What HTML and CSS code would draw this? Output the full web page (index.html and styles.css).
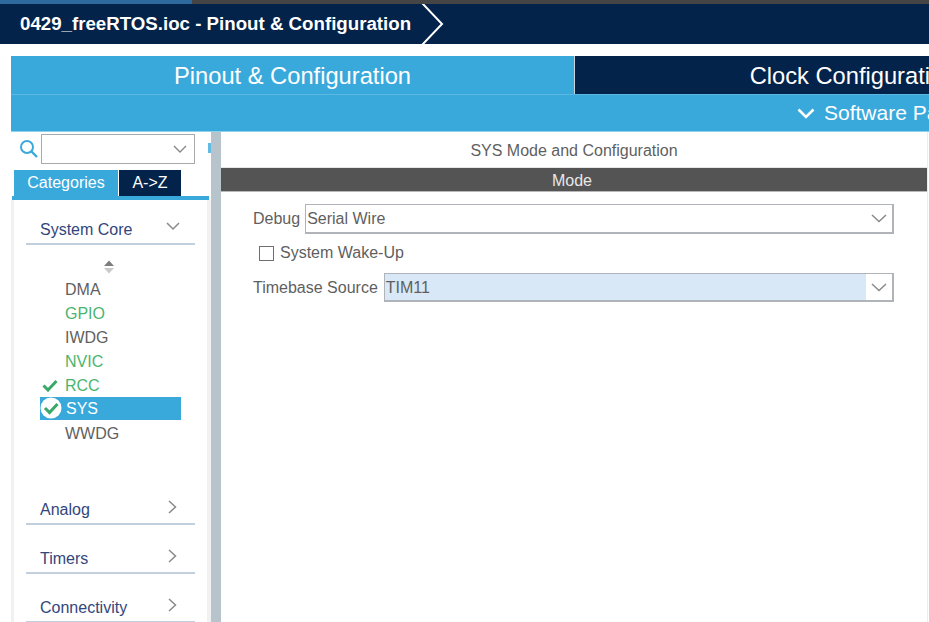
FILE: index.html
```html
<!DOCTYPE html>
<html lang="en">
<head>
<meta charset="utf-8">
<title>Pinout &amp; Configuration</title>
<link rel="stylesheet" href="styles.css">
</head>
<body>
<div class="progress"><div class="progress-fill"></div></div>
<header class="crumb">
  <span class="crumb-text">0429_freeRTOS.ioc - Pinout &amp; Configuration</span>
  <svg class="crumb-arrow" width="24" height="40" viewBox="0 0 24 40"><path d="M1 -1 L21 20 L1 41" fill="none" stroke="#fff" stroke-width="2"/></svg>
</header>
<div class="workspace">
  <nav class="tabs">
    <div class="tab tab-active">Pinout &amp; Configuration</div>
    <div class="tab tab-dark">Clock Configuration</div>
  </nav>
  <div class="subbar">
    <div class="subbar-left"></div>
    <div class="subbar-right">
      <svg class="sw-chevron" width="18" height="11" viewBox="0 0 18 11"><path d="M1.5 1.5 L9 9 L16.5 1.5" fill="none" stroke="#fff" stroke-width="2.6"/></svg>
      <span>Software Packs</span>
    </div>
  </div>
  <div class="main">
    <aside class="sidebar">
      <div class="search">
        <svg class="search-icon" width="20" height="20" viewBox="0 0 20 20"><circle cx="8" cy="8" r="6" fill="none" stroke="#39a9dc" stroke-width="2"/><path d="M12.5 12.5 L18 18" stroke="#39a9dc" stroke-width="2.4"/></svg>
        <div class="search-box">
          <svg width="14" height="8" viewBox="0 0 14 8"><path d="M1 1 L7 7 L13 1" fill="none" stroke="#888" stroke-width="1.4"/></svg>
        </div>
        <span class="gear-peek"></span>
      </div>
      <div class="cat-tabs">
        <div class="cat-tab cat-tab-on">Categories</div>
        <div class="cat-tab cat-tab-off">A-&gt;Z</div>
      </div>
      <div class="tree">
        <div class="group group-first">
          <span>System Core</span>
          <svg width="14" height="9" viewBox="0 0 14 9"><path d="M1 1 L7 7 L13 1" fill="none" stroke="#8a8a8a" stroke-width="1.5"/></svg>
        </div>
        <svg class="sort" width="12" height="14" viewBox="0 0 12 14"><path d="M6 0.500 L11 6 H1 Z" fill="#7d7d7d"/><path d="M6 13.500 L11 8 H1 Z" fill="#c9c9c9"/></svg>
        <ul class="items">
          <li class="item">DMA</li>
          <li class="item item-green">GPIO</li>
          <li class="item">IWDG</li>
          <li class="item item-green">NVIC</li>
          <li class="item item-green">
            <svg class="mark" width="16" height="13" viewBox="0 0 16 13"><path d="M1.500 6.500 L6 11 L14.500 2" fill="none" stroke="#3aa868" stroke-width="3"/></svg>
            RCC
          </li>
          <li class="item item-selected">
            <svg class="mark-round" width="22" height="22" viewBox="0 0 22 22"><circle cx="11" cy="11" r="10.500" fill="#fff"/><path d="M5 11 L9.500 15.500 L17.500 7" fill="none" stroke="#3aa868" stroke-width="3"/></svg>
            SYS
          </li>
          <li class="item">WWDG</li>
        </ul>
        <div class="group group-analog group-closed"><span>Analog</span>
          <svg width="9" height="14" viewBox="0 0 9 14"><path d="M1 1 L7.500 7 L1 13" fill="none" stroke="#8a8a8a" stroke-width="1.500"/></svg>
        </div>
        <div class="group group-closed"><span>Timers</span>
          <svg width="9" height="14" viewBox="0 0 9 14"><path d="M1 1 L7.500 7 L1 13" fill="none" stroke="#8a8a8a" stroke-width="1.500"/></svg>
        </div>
        <div class="group group-closed"><span>Connectivity</span>
          <svg width="9" height="14" viewBox="0 0 9 14"><path d="M1 1 L7.500 7 L1 13" fill="none" stroke="#8a8a8a" stroke-width="1.500"/></svg>
        </div>
      </div>
    </aside>
    <div class="splitter"></div>
    <section class="content">
      <h2 class="content-title">SYS Mode and Configuration</h2>
      <div class="mode-bar">Mode</div>
      <div class="form">
        <div class="row row-debug">
          <label class="field-label">Debug</label>
          <div class="select">
            <span class="select-value">Serial Wire</span>
            <span class="select-btn"><svg width="16" height="9" viewBox="0 0 16 9"><path d="M1 1 L8 7.500 L15 1" fill="none" stroke="#8a8a8a" stroke-width="1.500"/></svg></span>
          </div>
        </div>
        <div class="row row-check">
          <span class="check"></span>
          <span class="field-label">System Wake-Up</span>
        </div>
        <div class="row row-time">
          <label class="field-label">Timebase Source</label>
          <div class="select">
            <span class="select-value select-value-hi">TIM11</span>
            <span class="select-btn"><svg width="16" height="9" viewBox="0 0 16 9"><path d="M1 1 L8 7.500 L15 1" fill="none" stroke="#8a8a8a" stroke-width="1.500"/></svg></span>
          </div>
        </div>
      </div>
    </section>
  </div>
</div>
</body>
</html>
```

FILE: styles.css
```css
* { box-sizing: border-box; }
html, body { margin: 0; padding: 0; height: 622px; overflow: hidden; background: #fff; }
body { font-family: "Liberation Sans", Arial, sans-serif; color: #5f5f5f; width: 929px; }

.progress { height: 4px; background: #454545; }
.progress-fill { width: 192px; height: 100%; background: #2e6a9e; }

.crumb { height: 40px; background: #03234b; display: flex; align-items: center; padding-left: 20px; overflow: hidden; }
.crumb-text { color: #fff; font-size: 18.700px; font-weight: bold; white-space: nowrap; }
.crumb-arrow { margin-left: 10px; flex: none; }

.workspace { margin: 12px 0 0 11px; }

.tabs { display: flex; height: 38px; }
.tab { height: 38px; font-size: 23.700px; color: #fff; display: flex; justify-content: center; padding-top: 7px; white-space: nowrap; flex: none; width: 563px; }
.tab-active { background: #39a9dc; }
.tab-dark { background: #03234b; border-left: 1px solid #c8d3da; padding-right: 6px; }

.subbar { display: flex; height: 38px; background: #39a9dc; width: 1126px; border-top: 1px solid #5cb8e2; border-bottom: 1px solid #8fd0ec; }
.subbar-left { width: 563px; flex: none; }
.subbar-right { display: flex; align-items: center; padding-left: 223px; gap: 9px; color: #fff; font-size: 21px; white-space: nowrap; }

.main { display: flex; height: 490px; }

.sidebar { width: 200px; flex: none; background: #fff; display: flex; flex-direction: column; }
.search { display: flex; align-items: center; padding: 2px 0 0 8px; height: 32px; position: relative; }
.search-icon { flex: none; margin-right: 2px; }
.search-box { width: 154px; height: 30px; border: 1px solid #a9a9a9; display: flex; align-items: center; justify-content: flex-end; padding-right: 7px; background: #fff; }
.gear-peek { position: absolute; left: 197px; top: 11px; width: 3px; height: 10px; background: #39a9dc; opacity: 0.800; }

.cat-tabs { display: flex; margin: 6px 2px 0 1px; padding-left: 2px; gap: 1px; height: 30px; border-bottom: 4px solid #39a9dc; flex: none; }
.cat-tab { font-size: 16px; color: #fff; display: flex; align-items: center; justify-content: center; }
.cat-tab-on { width: 104px; background: #39a9dc; }
.cat-tab-off { width: 62px; background: #03234b; }

.tree { flex: 1; background: #fff; padding: 0 12px 0 15px; box-shadow: inset 3px 0 0 #f1f1f1, inset -4px 0 0 #f1f1f1; }
.group { display: flex; justify-content: space-between; align-items: center; height: 32px; margin-top: 17px; padding: 4px 15px 0 14px; border-bottom: 2px solid #c2d0de; color: #32467c; font-size: 16px; width: 169px; }
.group svg { flex: none; margin-top: -6px; }
.group-first { margin-top: 12px; height: 33px; }
.group-analog { margin-top: 0; }
.group-closed { padding-right: 18px; }

.sort { display: block; margin: 15px 0 0 77px; }
.items { list-style: none; margin: 3px 0 48px 0; padding: 0 0 0 14px; }
.item { height: 24px; line-height: 25px; font-size: 16px; color: #5f5f5f; padding-left: 25px; width: 141px; position: relative; }
.item-green { color: #4ab56e; }
.item-selected { background: #39a9dc; color: #fff; padding-left: 26px; height: 23px; line-height: 23px; margin-bottom: 1px; }
.mark { position: absolute; left: 2px; top: 6px; }
.mark-round { position: absolute; left: 0; top: 0; }

.splitter { width: 10px; flex: none; background: #b8c4cc; }

.content { width: 707px; flex: none; border-right: 1px solid #ececec; }
.content-title { margin: 0; height: 36px; font-size: 16px; font-weight: normal; color: #5f5f5f; text-align: center; line-height: 38px; border-bottom: 1px solid #e6e6e6; }
.mode-bar { height: 24px; background: #545454; color: #e8e8e8; font-size: 16px; text-align: center; line-height: 25px; padding-right: 4px; border-bottom: 1px solid #b8b8b8; }
.form { padding: 12px 33px 0 32px; display: flex; flex-direction: column; }
.row { display: flex; align-items: center; }
.field-label { font-size: 16px; color: #5f5f5f; white-space: nowrap; }
.row-debug { height: 30px; gap: 5px; }
.row-check { height: 30px; margin-top: 4px; padding-left: 6px; gap: 6px; }
.row-time { height: 29px; margin-top: 5px; gap: 6px; }
.check { width: 15px; height: 15px; border: 1px solid #6f6f6f; background: #fff; flex: none; }
.select { flex: 1; height: 100%; border: 2px solid #b0b4b8; border-top-width: 1px; border-left-width: 1px; display: flex; align-items: stretch; background: #fff; }
.select-value { flex: 1; font-size: 16px; line-height: 28px; padding-left: 1px; color: #5f5f5f; }
.select-value-hi { background: #d8e8f6; }
.select-btn { width: 26px; flex: none; display: flex; align-items: center; justify-content: center; background: #fff; }
```
